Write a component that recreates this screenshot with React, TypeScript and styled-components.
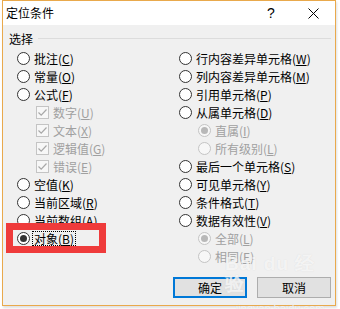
import styled, { createGlobalStyle } from "styled-components";

const GlobalStyle = createGlobalStyle`
  body {
    margin: 0;
    background: #ffffff;
    font-family: "Noto Sans CJK SC", "Noto Sans", sans-serif;
  }
`;

const Page = styled.div`
  width: 340px;
  height: 309px;
  overflow: hidden;
`;

const Window = styled.div`
  margin-left: 2px;
  width: 334px;
  height: 306px;
  box-sizing: border-box;
  border: 1px solid #e9a94c;
  display: flex;
  flex-direction: column;
  box-shadow: 1px 2px 2px rgba(0, 0, 0, 0.12);
`;

const TitleBar = styled.div`
  height: 24px;
  background: #ffffff;
  display: flex;
  align-items: center;
  padding-left: 3px;
  font-size: 12px;
  color: #000;
`;

const Title = styled.span`
  flex: 1;
  line-height: 14px;
`;

const Help = styled.span`
  width: 14px;
  margin-right: 29px;
  font-family: "Liberation Sans", sans-serif;
  font-size: 14px;
  text-align: center;
`;

const Close = styled.span`
  width: 12px;
  margin-right: 16px;
  display: flex;
  align-items: center;
  justify-content: center;
`;

const Body = styled.div`
  flex: 1;
  background: #f0f0f0;
  padding: 4px 4px 0 6px;
  display: flex;
  flex-direction: column;
  position: relative;
`;

const Legend = styled.div`
  height: 18px;
  display: flex;
  align-items: center;
  gap: 5px;
  font-size: 12px;
`;

const LegendLine = styled.div`
  flex: 1;
  height: 1px;
  background: #dcdcdc;
`;

const Columns = styled.div`
  margin-top: 2px;
  padding-left: 8px;
  display: grid;
  grid-template-columns: 162px 1fr;
`;

const Column = styled.div`
  display: flex;
  flex-direction: column;
`;

const Row = styled.div<{ $sub?: boolean }>`
  height: 18px;
  display: flex;
  align-items: center;
  gap: 2px;
  padding-left: ${(p) => (p.$sub ? "19px" : "0")};
`;

const Radio = styled.span<{ $disabled?: boolean; $checked?: boolean }>`
  width: 13px;
  height: 13px;
  box-sizing: border-box;
  border-radius: 50%;
  border: 1px solid ${(p) => (p.$disabled ? "#c4c4c4" : "#333333")};
  background: ${(p) => (p.$disabled ? "#f7f7f7" : "#ffffff")};
  display: flex;
  align-items: center;
  justify-content: center;
  &::after {
    content: "";
    display: ${(p) => (p.$checked ? "block" : "none")};
    width: 7px;
    height: 7px;
    border-radius: 50%;
    background: ${(p) => (p.$disabled ? "#b8b8b8" : "#333333")};
  }
`;

const Check = styled.span`
  width: 13px;
  height: 13px;
  box-sizing: border-box;
  border: 1px solid #c4c4c4;
  background: #f7f7f7;
  display: flex;
  align-items: center;
  justify-content: center;
`;

const Label = styled.span<{ $disabled?: boolean; $focus?: boolean }>`
  font-size: 12px;
  line-height: 13px;
  padding: 0 1px;
  border: 1px ${(p) => (p.$focus ? "dotted #000" : "solid transparent")};
  color: ${(p) => (p.$disabled ? "#a0a0a0" : "#000000")};
  white-space: nowrap;
`;

const Key = styled.span`
  text-decoration: underline;
  text-underline-offset: 1px;
`;

const Buttons = styled.div`
  margin-top: 12px;
  display: flex;
  justify-content: flex-end;
  gap: 10px;
`;

const Button = styled.button<{ $primary?: boolean }>`
  width: 74px;
  height: 21px;
  box-sizing: border-box;
  border: ${(p) => (p.$primary ? "2px solid #0078d7" : "1px solid #adadad")};
  background: #e1e1e1;
  font-family: "Noto Sans CJK SC", sans-serif;
  font-size: 12px;
  line-height: 14px;
  color: #000;
  padding: 0;
`;

const Highlight = styled.div`
  position: absolute;
  left: 3px;
  top: 198px;
  width: 100px;
  height: 30px;
  box-sizing: border-box;
  border: 7px solid #ef3b3b;
  pointer-events: none;
`;

/* faint site watermark lying over the dialog */
const Watermark = styled.div`
  position: absolute;
  left: 222px;
  top: 229px;
  display: flex;
  flex-direction: column;
  align-items: center;
  color: rgba(255, 255, 255, 0.7);
  text-shadow: 0 0 1px rgba(190, 190, 190, 0.45);
  pointer-events: none;
`;

const MarkBig = styled.span`
  font-family: "Liberation Sans", sans-serif;
  font-weight: 700;
  font-size: 19px;
  line-height: 20px;
  letter-spacing: 1px;
`;

const MarkSmall = styled.span`
  margin-top: 8px;
  font-family: "Liberation Sans", sans-serif;
  font-size: 11px;
  line-height: 12px;
`;

type Item = {
  label: string;
  k: string;
  kind?: "radio" | "check";
  sub?: boolean;
  disabled?: boolean;
  checked?: boolean;
  focus?: boolean;
};

const leftItems: Item[] = [
  { label: "批注", k: "C" },
  { label: "常量", k: "O" },
  { label: "公式", k: "F" },
  { label: "数字", k: "U", kind: "check", sub: true, disabled: true },
  { label: "文本", k: "X", kind: "check", sub: true, disabled: true },
  { label: "逻辑值", k: "G", kind: "check", sub: true, disabled: true },
  { label: "错误", k: "E", kind: "check", sub: true, disabled: true },
  { label: "空值", k: "K" },
  { label: "当前区域", k: "R" },
  { label: "当前数组", k: "A" },
  { label: "对象", k: "B", checked: true, focus: true },
];

const rightItems: Item[] = [
  { label: "行内容差异单元格", k: "W" },
  { label: "列内容差异单元格", k: "M" },
  { label: "引用单元格", k: "P" },
  { label: "从属单元格", k: "D" },
  { label: "直属", k: "I", sub: true, disabled: true, checked: true },
  { label: "所有级别", k: "L", sub: true, disabled: true },
  { label: "最后一个单元格", k: "S" },
  { label: "可见单元格", k: "Y" },
  { label: "条件格式", k: "T" },
  { label: "数据有效性", k: "V" },
  { label: "全部", k: "L", sub: true, disabled: true, checked: true },
  { label: "相同", k: "E", sub: true, disabled: true },
];

function Option({ item }: { item: Item }) {
  return (
    <Row $sub={item.sub}>
      {item.kind === "check" ? (
        <Check>
          <svg width="11" height="11" viewBox="0 0 11 11">
            <path d="M1.5 5.5 L4.2 8.2 L9.5 2.5" fill="none" stroke="#a8a8a8" strokeWidth="1.2" />
          </svg>
        </Check>
      ) : (
        <Radio $disabled={item.disabled} $checked={item.checked} />
      )}
      <Label $disabled={item.disabled} $focus={item.focus}>
        {item.label}(<Key>{item.k}</Key>)
      </Label>
    </Row>
  );
}

export default function App() {
  return (
    <Page>
      <GlobalStyle />
      <Window>
        <TitleBar>
          <Title>定位条件</Title>
          <Help>?</Help>
          <Close>
            <svg width="11" height="11" viewBox="0 0 11 11">
              <path d="M0.5 0.5 L10.5 10.5 M10.5 0.5 L0.5 10.5" stroke="#000" strokeWidth="1" />
            </svg>
          </Close>
        </TitleBar>
        <Body>
          <Legend>
            <span>选择</span>
            <LegendLine />
          </Legend>
          <Columns>
            <Column>
              {leftItems.map((it) => (
                <Option key={it.label} item={it} />
              ))}
            </Column>
            <Column>
              {rightItems.map((it) => (
                <Option key={it.label} item={it} />
              ))}
            </Column>
          </Columns>
          <Buttons>
            <Button $primary>确定</Button>
            <Button>取消</Button>
          </Buttons>
          <Highlight />
          <Watermark>
            <MarkBig>Bai du 经验</MarkBig>
            <MarkSmall>jingyan.baidu.com</MarkSmall>
          </Watermark>
        </Body>
      </Window>
    </Page>
  );
}
